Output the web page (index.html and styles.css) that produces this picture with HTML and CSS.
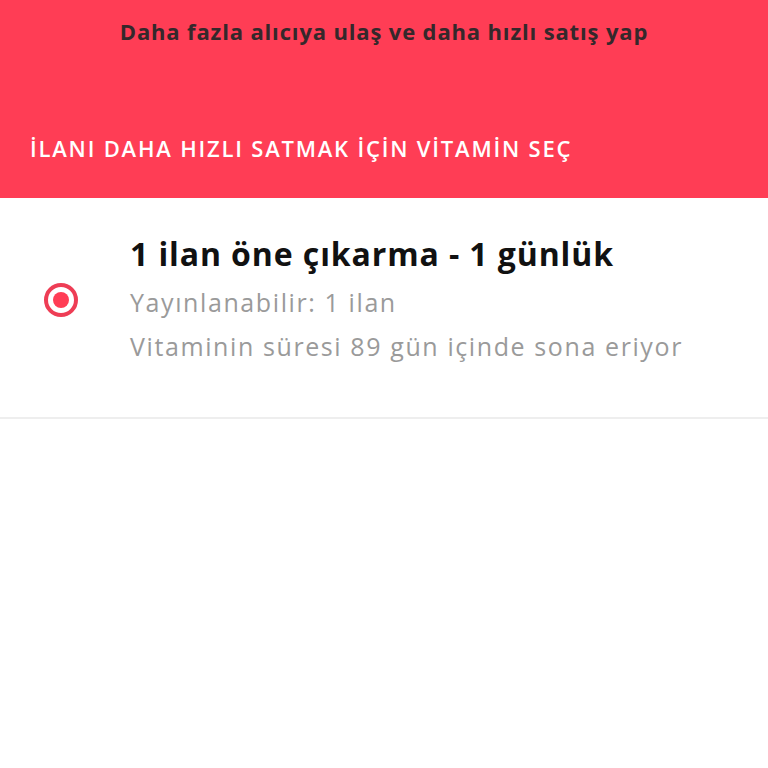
FILE: index.html
```html
<!DOCTYPE html>
<html lang="tr">
<head>
<meta charset="utf-8">
<link rel="stylesheet" href="styles.css">
</head>
<body>
<header class="banner">
  <div class="banner-title">Daha fazla alıcıya ulaş ve daha hızlı satış yap</div>
  <div class="banner-sub">İLANI DAHA HIZLI SATMAK İÇİN VİTAMİN SEÇ</div>
</header>
<section class="option">
  <div class="radio"><span class="radio-dot"></span></div>
  <div class="option-text">
    <div class="option-title">1 ilan öne çıkarma - 1 günlük</div>
    <div class="option-line">Yayınlanabilir: 1 ilan</div>
    <div class="option-line">Vitaminin süresi 89 gün içinde sona eriyor</div>
  </div>
</section>
</body>
</html>
```

FILE: styles.css
```css
* { box-sizing: border-box; }
html, body {
  margin: 0;
  padding: 0;
  background: #ffffff;
  font-family: "Open Sans", Lato, sans-serif;
}
.banner {
  background: #ff3d55;
  height: 198px;
  display: flex;
  flex-direction: column;
}
.banner-title {
  color: #35282b;
  font-weight: 700;
  font-size: 22px;
  letter-spacing: 0.85px;
  text-align: center;
  padding-top: 16px;
  line-height: 30px;
}
.banner-sub {
  color: #ffffff;
  font-weight: 600;
  font-size: 22px;
  letter-spacing: 1.8px;
  line-height: 30px;
  padding-left: 30px;
  margin-top: 87px;
}
.option {
  display: flex;
  align-items: center;
  padding: 34px 0 49px 44px;
  border-bottom: 2px solid #eeeeee;
}
.radio {
  width: 34px;
  height: 34px;
  border-radius: 50%;
  border: 4px solid #ee3d55;
  display: flex;
  align-items: center;
  justify-content: center;
  flex-shrink: 0;
}
.radio-dot {
  width: 16px;
  height: 16px;
  border-radius: 50%;
  background: #ff3d55;
}
.option-text {
  margin-left: 52px;
  display: flex;
  flex-direction: column;
}
.option-title {
  color: #111111;
  font-weight: 700;
  font-size: 32px;
  letter-spacing: 0.9px;
  line-height: 44px;
  margin-bottom: 4px;
}
.option-line {
  color: #9a9a9a;
  font-size: 25px;
  letter-spacing: 1.6px;
  line-height: 44px;
}
```
